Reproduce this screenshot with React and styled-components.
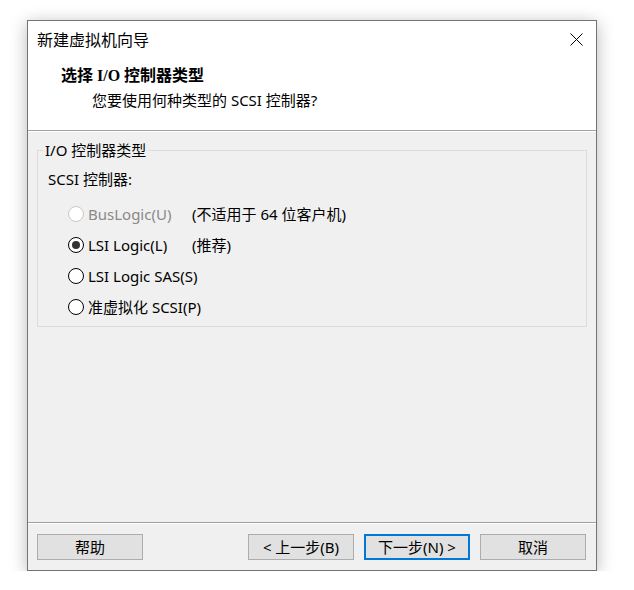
import React from "react";
import styled, { createGlobalStyle } from "styled-components";

const Global = createGlobalStyle`
  html, body { margin: 0; padding: 0; background: #ffffff; }
  body { font-family: "Noto Sans", "Noto Sans CJK SC", sans-serif; color: #000; }
  * { box-sizing: border-box; }
`;

const Window = styled.div`
  margin: 20px 0 0 27px;
  width: 570px;
  height: 551px;
  border: 1px solid #747474;
  box-shadow: 0 3px 16px rgba(0, 0, 0, 0.28);
  display: flex;
  flex-direction: column;
  background: #f0f0f0;
`;

const Header = styled.div`
  background: #ffffff;
  height: 110px;
  border-bottom: 1px solid #a0a0a0;
  display: flex;
  flex-direction: column;
`;

const TitleBar = styled.div`
  height: 38px;
  display: flex;
  align-items: flex-start;
  justify-content: space-between;
  padding: 8px 0 0 9px;
`;

const TitleText = styled.span`
  font-family: "Noto Sans CJK SC", sans-serif;
  font-size: 16px;
  line-height: 20px;
`;

const CloseButton = styled.div`
  width: 40px;
  height: 20px;
  display: flex;
  align-items: center;
  justify-content: center;
`;

const Heading = styled.div`
  margin: 7px 0 0 33px;
  font-family: "Liberation Serif", "Noto Sans CJK SC", serif;
  font-weight: bold;
  font-size: 16px;
  line-height: 20px;
`;

const SubHeading = styled.div`
  margin: 4px 0 0 64px;
  font-size: 15px;
  line-height: 20px;
`;

const Body = styled.div`
  flex: 1;
  border-top: 1px solid #ffffff;
  padding: 8px 9px 0 9px;
`;

const GroupBox = styled.fieldset`
  margin: 0;
  border: 1px solid #dcdcdc;
  padding: 0 10px 9px 10px;
  min-width: 0;
`;

const Legend = styled.legend`
  margin-left: -5px;
  padding: 0 2px;
  font-size: 15px;
  line-height: 20px;
`;

const FieldLabel = styled.div`
  margin-top: 9px;
  font-size: 15px;
  line-height: 20px;
`;

const RadioList = styled.div`
  margin-top: 15px;
  display: flex;
  flex-direction: column;
  gap: 11px;
  padding-left: 20px;
`;

const RadioRow = styled.div`
  display: flex;
  align-items: center;
  height: 20px;
  font-size: 15px;
  color: ${(p) => (p.disabled ? "#8a8a8a" : "#000")};
`;

const RadioCircle = styled.span`
  width: 16px;
  height: 16px;
  border-radius: 50%;
  border: 1px solid ${(p) => (p.disabled ? "#c8c8c8" : "#000")};
  background: #ffffff;
  display: flex;
  align-items: center;
  justify-content: center;
  flex: none;
  margin-right: 4px;
  &::after {
    content: "";
    width: 8px;
    height: 8px;
    border-radius: 50%;
    background: #333333;
    display: ${(p) => (p.checked ? "block" : "none")};
  }
`;

const RadioLabel = styled.span`
  width: 104px;
  line-height: 20px;
  white-space: nowrap;
`;

const Note = styled.span`
  color: #000;
  line-height: 20px;
  white-space: nowrap;
`;

const Footer = styled.div`
  height: 48px;
  border-top: 1px solid #a0a0a0;
  box-shadow: inset 0 1px 0 #ffffff;
  padding: 11px 10px 10px 9px;
  display: flex;
  align-items: flex-start;
`;

const Spacer = styled.div`
  flex: 1;
`;

const ButtonGroup = styled.div`
  display: flex;
  gap: 10px;
`;

const Button = styled.div`
  width: 106px;
  height: 26px;
  background: #e1e1e1;
  border: ${(p) => (p.primary ? "2px solid #0078d7" : "1px solid #adadad")};
  display: flex;
  align-items: center;
  justify-content: center;
  font-size: 15px;
  line-height: 20px;
  white-space: nowrap;
`;

const options = [
  { label: "BusLogic(U)", note: "(不适用于 64 位客户机)", disabled: true },
  { label: "LSI Logic(L)", note: "(推荐)", checked: true },
  { label: "LSI Logic SAS(S)" },
  { label: "准虚拟化 SCSI(P)" },
];

export default function App() {
  return (
    <>
      <Global />
      <Window>
        <Header>
          <TitleBar>
            <TitleText>新建虚拟机向导</TitleText>
            <CloseButton>
              <svg width="13" height="13" viewBox="0 0 13 13">
                <path d="M0.5 0.5 L12.5 12.5 M12.5 0.5 L0.5 12.5" stroke="#000" strokeWidth="1" fill="none" />
              </svg>
            </CloseButton>
          </TitleBar>
          <Heading>选择 I/O 控制器类型</Heading>
          <SubHeading>您要使用何种类型的 SCSI 控制器?</SubHeading>
        </Header>
        <Body>
          <GroupBox>
            <Legend>I/O 控制器类型</Legend>
            <FieldLabel>SCSI 控制器:</FieldLabel>
            <RadioList>
              {options.map((o) => (
                <RadioRow key={o.label} disabled={o.disabled}>
                  <RadioCircle disabled={o.disabled} checked={o.checked} />
                  <RadioLabel>{o.label}</RadioLabel>
                  {o.note && <Note>{o.note}</Note>}
                </RadioRow>
              ))}
            </RadioList>
          </GroupBox>
        </Body>
        <Footer>
          <Button>帮助</Button>
          <Spacer />
          <ButtonGroup>
            <Button>&lt; 上一步(B)</Button>
            <Button primary>下一步(N) &gt;</Button>
            <Button>取消</Button>
          </ButtonGroup>
        </Footer>
      </Window>
    </>
  );
}
